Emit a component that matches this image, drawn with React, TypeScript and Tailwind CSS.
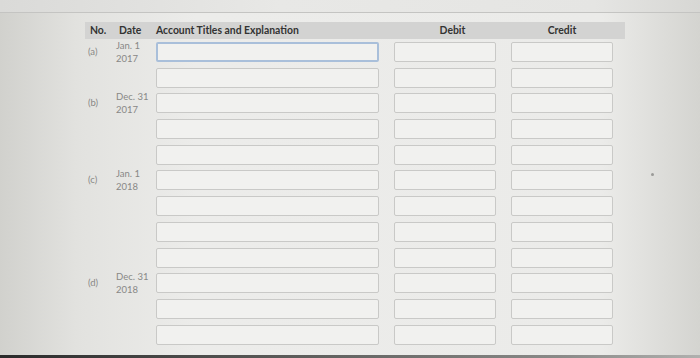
import React from 'react';

interface Group {
  label: string;
  date: [string, string];
  rows: number;
}

const groups: Group[] = [
  { label: '(a)', date: ['Jan. 1', '2017'], rows: 2 },
  { label: '(b)', date: ['Dec. 31', '2017'], rows: 3 },
  { label: '(c)', date: ['Jan. 1', '2018'], rows: 4 },
  { label: '(d)', date: ['Dec. 31', '2018'], rows: 3 },
];

function Box({ className, focused }: { className: string; focused?: boolean }) {
  return (
    <div
      className={`h-[20px] rounded-[2px] bg-[#f1f1ef] ${
        focused ? 'border-2 border-[#a9bfda]' : 'border-[1.5px] border-[#c9c9c7]'
      } ${className}`}
    />
  );
}

export default function App() {
  let rowIndex = 0;

  return (
    <div
      className="w-[700px] h-[358px] overflow-hidden flex flex-col bg-[linear-gradient(to_right,#d1d1cd_0%,#e2e2df_11%,#ececea_28%,#ebebe9_86%,#d4d4d0_100%)]"
      style={{ fontFamily: 'Lato, "Open Sans", sans-serif' }}
    >
      {/* top strip */}
      <div className="h-[13px] shrink-0 bg-[linear-gradient(to_right,#dadad8,#e8e8e6_40%,#e5e5e3_85%,#d7d7d4)] border-b border-[#c4c4c2]" />

      <div className="flex-1 flex">
        <div className="w-[85px] shrink-0" />

        <div className="w-[540px] shrink-0 flex flex-col">
          {/* header */}
          <div className="mt-[9px] h-[17px] bg-[#d3d3d2] flex items-center text-[10.4px] font-bold text-[#333333]">
            <div className="w-[31px] pl-[5px]">No.</div>
            <div className="w-[40px] pl-[3px]">Date</div>
            <div className="w-[238px]">Account Titles and Explanation</div>
            <div className="w-[117px] text-center">Debit</div>
            <div className="w-[102px] text-center">Credit</div>
          </div>

          {/* rows */}
          <div className="mt-[3px] flex flex-col gap-[5.7px]">
            {groups.map((g) =>
              Array.from({ length: g.rows }).map((_, i) => {
                const idx = rowIndex++;
                return (
                  <div key={`${g.label}-${i}`} className="h-[20px] flex items-center">
                    <div className="w-[31px] pl-[3px] text-[9.5px] text-[#888886]">
                      {i === 0 ? g.label : ''}
                    </div>
                    <div className="w-[40px] text-[9.5px] leading-[13px] text-[#888886]">
                      {i === 0 && (
                        <>
                          <div>{g.date[0]}</div>
                          <div>{g.date[1]}</div>
                        </>
                      )}
                    </div>
                    <Box className="w-[223px]" focused={idx === 0} />
                    <Box className="ml-[15px] w-[102px]" />
                    <Box className="ml-[15px] w-[102px]" />
                  </div>
                );
              })
            )}
          </div>
        </div>

        <div className="flex-1 flex flex-col items-start">
          <div className="mt-[160px] ml-[26px] w-[3px] h-[3px] rounded-full bg-[#9a9a98]" />
        </div>
      </div>

      {/* bottom bezel */}
      <div className="h-[3px] shrink-0 bg-[linear-gradient(to_right,#2a2a2a,#5a5a58_40%,#8a8a88_80%,#b0b0ae)]" />
    </div>
  );
}
